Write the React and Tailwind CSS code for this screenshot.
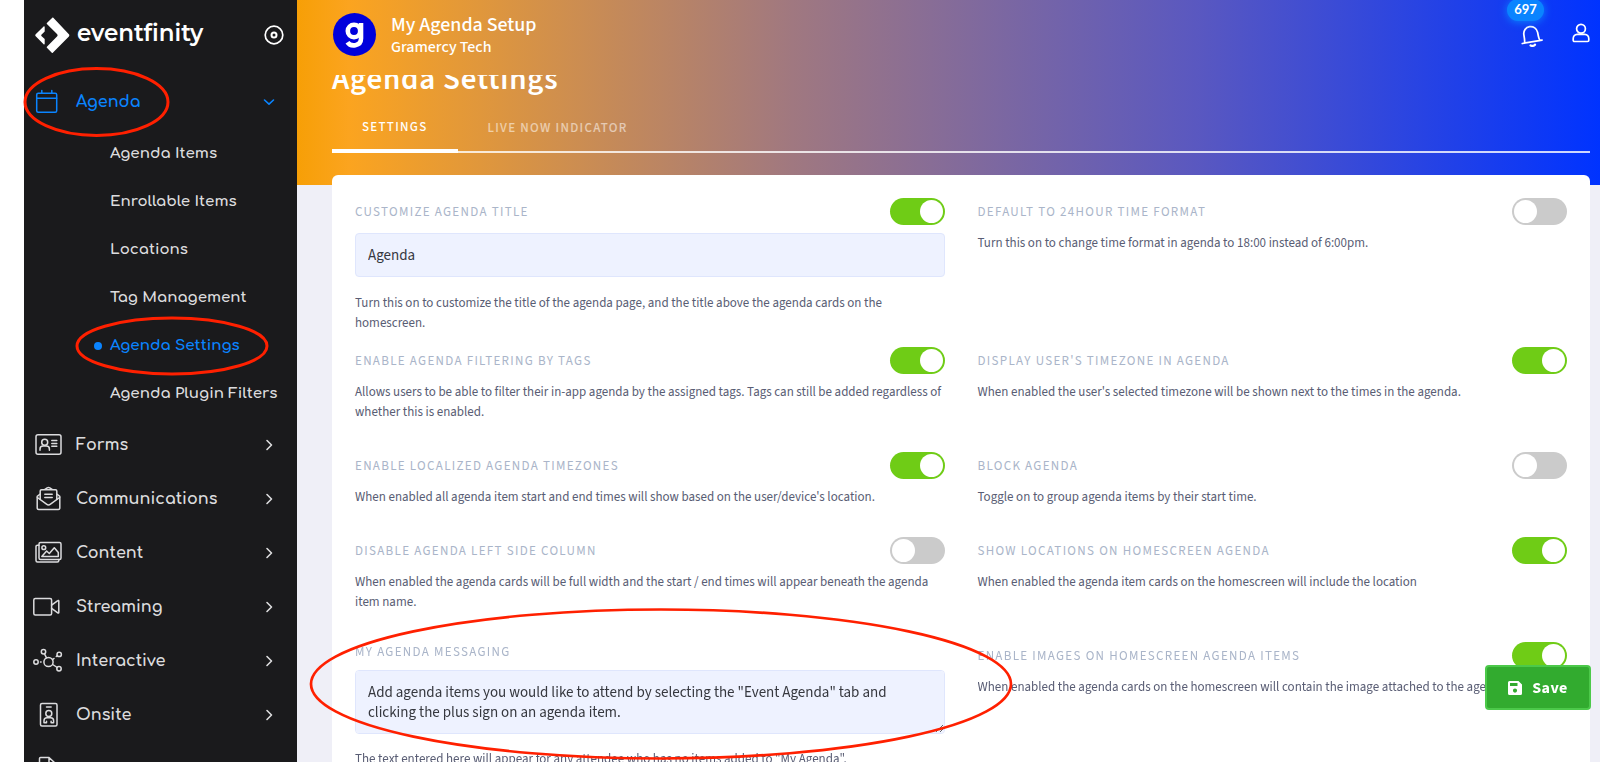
import React from "react";

const BODY_FONT = "font-['Source_Sans_3','Noto_Sans_CJK_SC',sans-serif]";
const NAV_FONT = "font-['Comfortaa','Quicksand','Lato',sans-serif]";

const stroke = {
  fill: "none",
  stroke: "currentColor",
  strokeWidth: 1.5,
  strokeLinecap: "round",
  strokeLinejoin: "round",
};

function CalendarIcon() {
  return (
    <svg width="27" height="26" viewBox="0 0 27 26" aria-hidden="true" {...stroke}>
      <rect x="1.7" y="4.3" width="20" height="19" rx="1.5" />
      <path d="M1.7 9.2h20M6.8 1.5v2.8M16.8 1.5v2.8" />
    </svg>
  );
}

function FormsIcon() {
  return (
    <svg width="27" height="24" viewBox="0 0 27 24" aria-hidden="true" {...stroke}>
      <rect x="1" y="1.8" width="25" height="19.4" rx="2" />
      <circle cx="9.7" cy="9.3" r="3" />
      <path d="M5 17.3v-1.2c0-1.9 1.5-3 3-3h3.4c1.5 0 3 1.1 3 3v1.2M16.8 7.6h5M16.8 10.4h5M16.8 13.2h5" />
    </svg>
  );
}

function MailIcon() {
  return (
    <svg width="27" height="26" viewBox="0 0 27 26" aria-hidden="true" {...stroke}>
      <path d="M5.2 8 2.2 10.4v11.7c0 .9.6 1.5 1.5 1.5h19.6c.9 0 1.5-.6 1.5-1.5V10.4L21.8 8" />
      <path d="M2.4 11.5 11.5 18.2c1.2.9 2.8.9 4 0l9.1-6.7" />
      <path d="M5.2 13.5V5c0-.8.5-1.3 1.3-1.3h14c.8 0 1.3.5 1.3 1.3v8.5M9.5 3.6l2.7-1.7c.8-.5 1.8-.5 2.6 0l2.7 1.7M9.8 8.3h7.4M9.8 11.5h7.4" />
    </svg>
  );
}

function ContentIcon() {
  return (
    <svg width="27" height="24" viewBox="0 0 27 24" aria-hidden="true" {...stroke}>
      <rect x="4" y="1.6" width="22" height="16.8" rx="1.5" />
      <path d="M4 4.2H2.5C1.6 4.2 1 4.8 1 5.7v13.8c0 .9.6 1.5 1.5 1.5h19.8c.9 0 1.5-.6 1.5-1.5v-1" />
      <circle cx="8.8" cy="6.7" r="1.9" />
      <path d="M6.8 15.5 11.6 10l2.7 2.5 5-5.8 4 4.8v4Z" />
    </svg>
  );
}

function VideoIcon() {
  return (
    <svg width="30" height="20" viewBox="1 0 30 20" aria-hidden="true" {...stroke}>
      <rect x="1.8" y="1.5" width="17.8" height="16.5" rx="1.5" />
      <path d="m19.6 8.2 6.2-4.6c.5-.4 1-.1 1 .5v11.3c0 .6-.5.9-1 .5l-6.2-4.6" />
    </svg>
  );
}

function NetworkIcon() {
  return (
    <svg width="30" height="26" viewBox="0 0 30 26" aria-hidden="true" {...stroke}>
      <circle cx="15.5" cy="14" r="4.6" />
      <circle cx="10.5" cy="3.7" r="2.2" />
      <circle cx="26.2" cy="6.4" r="2.2" />
      <circle cx="26" cy="20.8" r="2.2" />
      <circle cx="3" cy="14" r="2.2" />
      <path d="m11.5 5.8 2 4M24.3 7.7l-1 .8M21 10.5l-1.5 1.2M24.2 19.5l-4.5-3M7.500 14h.6" />
    </svg>
  );
}

function BadgeIcon() {
  return (
    <svg width="27" height="26" viewBox="0 0 27 26" aria-hidden="true" {...stroke}>
      <rect x="5.5" y="1.5" width="16.5" height="22.5" rx="1.5" />
      <path d="M11.5 5h4.600" />
      <circle cx="13.8" cy="11.5" r="3" />
      <path d="M9 20.8v-2c0-1.8 1.3-3 3-3h3.6c1.7 0 3 1.2 3 3v2h-2.500v-1.500M11.500 20.800v-1.500M9 20.800h2.500" />
    </svg>
  );
}

function PageIcon() {
  return (
    <svg width="27" height="26" viewBox="0 0 27 26" aria-hidden="true" {...stroke}>
      <path d="M5.5 24V2.5c0-.6.4-1 1-1H15l6.5 6V24ZM15 1.5v6h6.5" />
    </svg>
  );
}

function Chevron({ down }) {
  return (
    <svg width="12" height="12" viewBox="0 0 12 12" aria-hidden="true" {...stroke} strokeWidth="1.6">
      <path d={down ? "M1.5 4 6 8.2 10.5 4" : "M4 1.5 8.5 6 4 10.5"} />
    </svg>
  );
}

const SUB_ITEMS = [
  "Agenda Items",
  "Enrollable Items",
  "Locations",
  "Tag Management",
  "Agenda Settings",
  "Agenda Plugin Filters",
];

const NAV_ITEMS = [
  ["Forms", FormsIcon],
  ["Communications", MailIcon],
  ["Content", ContentIcon],
  ["Streaming", VideoIcon],
  ["Interactive", NetworkIcon],
  ["Onsite", BadgeIcon],
];

function NavLink({ label, Icon, open }) {
  return (
    <a
      href="#"
      className={
        "flex h-[54px] shrink-0 items-center pl-[9px] pr-[22px] text-base font-bold " +
        (open ? "text-[#0a84ff]" : "text-[#dcdcde]")
      }
    >
      <span className="flex w-[30px] shrink-0 justify-center">
        <Icon />
      </span>
      <span className="ml-[13px] flex-1">{label}</span>
      <Chevron down={open} />
    </a>
  );
}

function Sidebar() {
  return (
    <aside className={"flex w-[273px] shrink-0 flex-col overflow-hidden bg-[#1a1a1c] " + NAV_FONT}>
      <div className="flex h-[75px] shrink-0 items-center justify-between pl-[11px] pr-[13px] pb-[5px]">
        <a href="#" className="flex items-center gap-[7px] text-white">
          <svg width="35" height="37" viewBox="0 0 35 37" aria-hidden="true" fill="currentColor">
            <path d="M17.3.7 11.9 5.9c-.3.3-.3.7 0 1L22 17c.8.8.8 1.8 0 2.6L11.9 29.8c-.3.3-.3.7 0 1l4.9 4.9c.3.3.7.3 1 0L33.9 19.4c.6-.6.6-1.5 0-2.1L18.3.7c-.3-.3-.7-.3-1 0Z" />
            <path d="M8.6 9.5.7 17.3c-.6.6-.6 1.4 0 2l7.900 7.900c.5.5 1.100.2 1.100-.4V22l-3.300-3.100c-.3-.3-.3-.8 0-1.100l3.300-3.300V9.900c0-.6-.6-.9-1.100-.4Z" />
          </svg>
          <span className="pb-1 font-['Montserrat','Lato',sans-serif] text-[23px] leading-8 font-semibold">
            eventfinity
          </span>
        </a>
        <button type="button" aria-label="Pin menu" className="text-white">
          <svg width="20" height="20" viewBox="0 0 20 20" aria-hidden="true" fill="none" stroke="currentColor">
            <circle cx="10" cy="10" r="8.8" strokeWidth="1.7" />
            <circle cx="10" cy="10" r="2.5" strokeWidth="2" />
          </svg>
        </button>
      </div>
      <nav className="flex flex-col">
        <NavLink label="Agenda" Icon={CalendarIcon} open />
        <ul className="flex flex-col pt-px">
          {SUB_ITEMS.map((item) => {
            const active = item === "Agenda Settings";
            return (
              <li key={item}>
                <a
                  href="#"
                  className={
                    "flex h-12 items-center pl-[70px] text-[15px] font-bold whitespace-nowrap " +
                    (active ? "text-[#0a84ff]" : "text-[#dcdcde]")
                  }
                >
                  <span className={"mr-2 size-2 rounded-full " + (active ? "bg-[#0a84ff]" : "bg-transparent")} />
                  {item}
                </a>
              </li>
            );
          })}
        </ul>
        {NAV_ITEMS.map(([label, Icon]) => (
          <NavLink key={label} label={label} Icon={Icon} />
        ))}
        <a href="#" aria-label="More" className="flex h-[54px] shrink-0 items-center pl-[10px] text-[#dcdcde]">
          <PageIcon />
        </a>
      </nav>
    </aside>
  );
}

function Header() {
  return (
    <header className="flex h-[75px] shrink-0 items-center gap-[15px] pb-[6px] pl-9 pr-[10px] text-white">
      <span className="flex size-[43px] items-center justify-center rounded-full bg-[#0000dc]">
        <svg width="20" height="26" viewBox="0 0 20 26" aria-hidden="true" fill="none" stroke="currentColor" strokeWidth="4.6">
          <circle cx="9" cy="9" r="6.2" />
          <path d="M16 1v15.5c0 8-10.5 8.5-13.5 3.7" />
        </svg>
      </span>
      <div className="flex flex-1 flex-col">
        <span className="text-xl leading-6 font-medium">My Agenda Setup</span>
        <span className="text-base leading-5 font-medium">Gramercy Tech</span>
      </div>
      <button type="button" aria-label="Notifications, 697 unread" className="relative mr-[14px] flex">
        <svg width="24" height="24" viewBox="0 0 22 22" aria-hidden="true" {...stroke} strokeWidth="1.6">
          <g transform="rotate(-10 11 11)">
            <path d="M1.8 17.3h18.4M3.8 17.2c.8-1.2.8-2.5.8-7.5a6.4 6.4 0 0 1 12.8 0c0 5 0 6.3.8 7.5" />
            <path d="M9 20.4c1 .8 3 .8 4 0" strokeWidth="2.2" />
          </g>
        </svg>
        <span className="absolute -top-6 -left-3 flex h-[22px] w-[37px] items-center justify-center rounded-full bg-[#0a84ff] font-['Lato',sans-serif] text-[13px] font-bold shadow-[0_1px_8px_#0a84ff]">
          697
        </span>
      </button>
      <button type="button" aria-label="Account" className="flex pb-1">
        <svg width="18" height="20" viewBox="0 0 18 20" aria-hidden="true" {...stroke} strokeWidth="1.7">
          <circle cx="9" cy="5.8" r="4.4" />
          <path d="M5.2 11.3h7.6c2.4 0 4 2 4 4.5v1.5c0 .8-.5 1.2-1.2 1.2H2.4c-.7 0-1.2-.4-1.2-1.2v-1.500c0-2.500 1.600-4.500 4-4.500Z" />
        </svg>
      </button>
    </header>
  );
}

function Tabs() {
  return (
    <div role="tablist" className="flex border-b-2 border-white/80 text-[13px] leading-5 font-medium tracking-widest">
      <button
        type="button"
        role="tab"
        aria-selected="true"
        className="-mb-[2px] border-b-4 border-white px-[30px] pb-3 text-white"
      >
        SETTINGS
      </button>
      <button type="button" role="tab" aria-selected="false" className="px-[30px] pb-3 text-white/55">
        LIVE NOW INDICATOR
      </button>
    </div>
  );
}

function Toggle({ id, on }) {
  return (
    <input
      id={id}
      type="checkbox"
      role="switch"
      defaultChecked={on}
      className="flex h-[27px] w-[55px] shrink-0 appearance-none items-center rounded-full bg-[#cbcbcb] px-[2px] before:size-[23px] before:rounded-full before:bg-white before:content-[''] checked:justify-end checked:bg-[#6fcc16]"
    />
  );
}

const LABEL = "text-[13px] leading-5 tracking-widest text-[#aab5c9] uppercase";
const HELP = "text-[13px] leading-5 text-[#595d74]";
const FIELD =
  "block w-full rounded border border-[#dfe6fd] bg-[#eef2ff] px-3 text-[15px] text-[#36383f] outline-none";

function Setting({ id, label, on, help, className = "", children }) {
  return (
    <div className={className}>
      <div className="flex h-[27px] items-center justify-between">
        <label htmlFor={id} className={LABEL}>
          {label}
        </label>
        <Toggle id={id} on={on} />
      </div>
      {children}
      <p className={"mt-2 " + HELP}>{help}</p>
    </div>
  );
}

function SettingsCard() {
  return (
    <form className="mr-[10px] grid flex-1 grid-cols-2 content-start gap-x-[33px] gap-y-[30px] rounded-t-md bg-white px-[23px] pt-[23px]">
      <Setting
        id="custom-title"
        label="Customize agenda title"
        on
        className="-mb-4"
        help={
          <span className="block pt-2">
            Turn this on to customize the title of the agenda page, and the title above the agenda cards on the
            homescreen.
          </span>
        }
      >
        <input
          type="text"
          aria-label="Agenda title"
          defaultValue="Agenda"
          className={"mt-2 h-11 " + FIELD}
        />
      </Setting>
      <Setting
        id="time-format"
        label="Default to 24hour time format"
        help="Turn this on to change time format in agenda to 18:00 instead of 6:00pm."
      />
      <Setting
        id="filter-tags"
        label="Enable agenda filtering by tags"
        on
        help="Allows users to be able to filter their in-app agenda by the assigned tags. Tags can still be added regardless of whether this is enabled."
      />
      <Setting
        id="user-timezone"
        label="Display user's timezone in agenda"
        on
        help="When enabled the user's selected timezone will be shown next to the times in the agenda."
      />
      <Setting
        id="localized"
        label="Enable localized agenda timezones"
        on
        help="When enabled all agenda item start and end times will show based on the user/device's location."
      />
      <Setting id="block-agenda" label="Block agenda" help="Toggle on to group agenda items by their start time." />
      <Setting
        id="left-column"
        label="Disable agenda left side column"
        help="When enabled the agenda cards will be full width and the start / end times will appear beneath the agenda item name."
      />
      <Setting
        id="show-locations"
        label="Show locations on homescreen agenda"
        on
        help="When enabled the agenda item cards on the homescreen will include the location"
      />
      <div>
        <label htmlFor="messaging" className={"block " + LABEL}>
          My agenda messaging
        </label>
        <textarea
          id="messaging"
          className={"mt-2 h-16 py-3 leading-5 " + FIELD}
          defaultValue={
            'Add agenda items you would like to attend by selecting the "Event Agenda" tab and clicking the plus sign on an agenda item.'
          }
        />
        <p className={"mt-[15px] " + HELP}>
          The text entered here will appear for any attendee who has no items added to "My Agenda".
        </p>
      </div>
      <Setting
        id="enable-images"
        label="Enable images on homescreen agenda items"
        on
        help={
          <span className="block overflow-hidden whitespace-nowrap">
            When enabled the agenda cards on the homescreen will contain the image attached to the agenda item.
          </span>
        }
      />
    </form>
  );
}

function Highlights() {
  return (
    <svg
      className="pointer-events-none absolute top-0 left-0 z-20"
      width="1020"
      height="762"
      viewBox="0 0 1020 762"
      aria-hidden="true"
      fill="none"
      stroke="#ff2000"
      strokeWidth="3"
    >
      <ellipse cx="96.5" cy="102" rx="71.5" ry="33.5" />
      <ellipse cx="172" cy="346" rx="95" ry="28" />
      <ellipse cx="661" cy="684" rx="350" ry="74.5" strokeWidth="2.7" />
    </svg>
  );
}

export default function App() {
  return (
    <div className={"relative flex h-screen overflow-hidden bg-white pl-6 " + BODY_FONT}>
      <Sidebar />
      <main className="flex min-w-0 flex-1 flex-col bg-[#efeff7] bg-[linear-gradient(to_right,#f79f06,#fba41f_4%,#a07880_38%,#5a58c0_69%,#0033ff)] bg-size-[100%_185px] bg-no-repeat">
        <Header />
        <div className="flex min-h-0 flex-1 flex-col overflow-hidden pl-[35px]">
          <h1 className="-mt-4 text-[31px] leading-10 font-semibold tracking-wide text-white">Agenda Settings</h1>
          <div className="mt-[18px] mr-[10px] mb-[22px]">
            <Tabs />
          </div>
          <SettingsCard />
        </div>
      </main>
      <button
        type="button"
        className="absolute right-[9px] bottom-[52px] z-10 flex h-[45px] w-[106px] items-center justify-center gap-[10px] rounded border-2 border-[#4cc94a] bg-[#32ab2f] text-base font-bold tracking-wide text-white"
      >
        <svg width="14" height="14" viewBox="0 0 14 14" aria-hidden="true" fill="currentColor" fillRule="evenodd">
          <path d="M1.5 0H10.5L14 3.5V12.5A1.5 1.5 0 0 1 12.5 14H1.5A1.5 1.5 0 0 1 0 12.5V1.5A1.5 1.5 0 0 1 1.5 0ZM2 2V5H9.5V2ZM7 7.5A2 2 0 1 0 7 11.7 2 2 0 1 0 7 7.5Z" />
        </svg>
        Save
      </button>
      <Highlights />
    </div>
  );
}
